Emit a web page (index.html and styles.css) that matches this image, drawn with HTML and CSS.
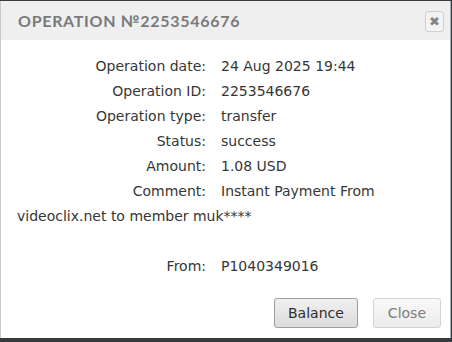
FILE: index.html
```html
<!DOCTYPE html>
<html>
  <head>
    <title>Operation</title>
    <link rel="stylesheet" href="styles.css">
  </head>
  <body>
    <div class="dialog">
      <div class="dialog-header">
        <span class="dialog-title">Operation №2253546676</span>
        <button class="dialog-close" title="Close">&#10006;</button>
      </div>
      <div class="dialog-body">
        <div class="row"><span class="label">Operation date:</span>24 Aug 2025 19:44</div>
        <div class="row"><span class="label">Operation ID:</span>2253546676</div>
        <div class="row"><span class="label">Operation type:</span>transfer</div>
        <div class="row"><span class="label">Status:</span>success</div>
        <div class="row"><span class="label">Amount:</span>1.08 USD</div>
        <div class="row"><span class="label">Comment:</span>Instant Payment From videoclix.net to member muk****<br><br></div>
        <div class="row"><span class="label">From:</span>P1040349016</div>
      </div>
      <div class="dialog-buttons">
        <button class="btn">Balance</button>
        <button class="btn btn-close">Close</button>
      </div>
    </div>
  </body>
</html>
```

FILE: styles.css
```css
body{
  margin: 0;
  background-color: #363b40;
  height: 342px;
}

.dialog{
  margin-top: 1px;
  width: 449px;
  height: 337px;
  background-color: white;
  border-left: 1px solid #c9c9c9;
  border-right: 1px solid #aeb0b2;
  display: flex;
  flex-direction: column;
}

.dialog-header{
  height: 39px;
  background-color: #efefef;
  display: flex;
  align-items: center;
  justify-content: space-between;
  padding: 0 6px 0 17px;
}

.dialog-title{
  font-family: "Lato", sans-serif;
  font-size: 16px;
  font-weight: bold;
  letter-spacing: 0.7px;
  text-transform: uppercase;
  color: #7a7a7a;
}

.dialog-close{
  width: 19px;
  height: 21px;
  padding: 0;
  margin-top: 1px;
  border: 1px solid #d0d0d0;
  border-radius: 3px;
  background-color: #f3f3f3;
  color: #858585;
  font-size: 13px;
  font-weight: bold;
  line-height: 19px;
  font-family: "DejaVu Sans", sans-serif;
}

.dialog-body{
  padding: 14px 16px 0 16px;
  font-family: "DejaVu Sans", sans-serif;
  font-size: 14px;
  line-height: 25px;
  color: #363636;
}

.label{
  display: inline-block;
  width: 189px;
  margin-right: 15px;
  text-align: right;
}

.dialog-buttons{
  display: flex;
  justify-content: flex-end;
  column-gap: 15px;
  padding: 19px 9px 0 0;
}

.btn{
  height: 30px;
  padding: 0 13px;
  font-family: "DejaVu Sans", sans-serif;
  font-size: 14px;
  color: #2f2f2f;
  border: 1px solid #9d9d9d;
  border-radius: 3px;
  background: linear-gradient(#f0f0f0, #dcdcdc);
}

.btn-close{
  padding: 0 14px;
  color: #7d7d7d;
  border-color: #d3d3d3;
  background: linear-gradient(#f8f8f8, #ececec);
}
```
